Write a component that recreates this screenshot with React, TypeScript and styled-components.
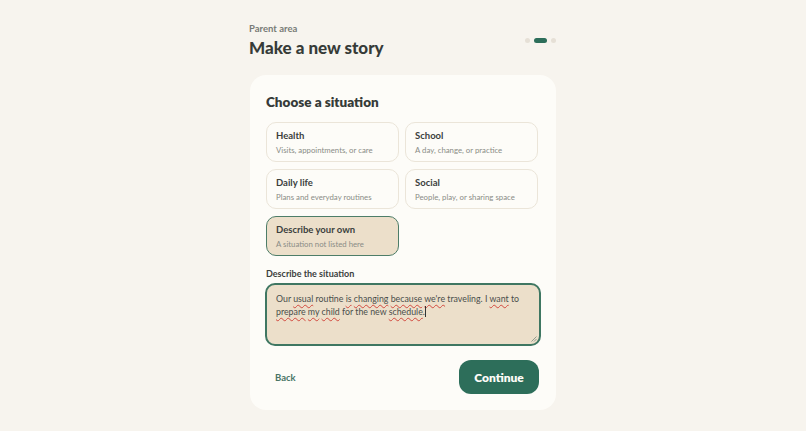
import React, { useState } from "react";
import styled, { createGlobalStyle } from "styled-components";

const Global = createGlobalStyle`
  html, body { margin: 0; padding: 0; background: #f7f4ee; }
  body { font-family: Lato, "Noto Sans", "Liberation Sans", sans-serif; color: #363b38; }
  * { box-sizing: border-box; }
`;

const Page = styled.div`
  width: 806px;
  height: 431px;
  display: flex;
  justify-content: center;
  padding-top: 23px;
`;

const Column = styled.div`
  width: 306px;
  display: flex;
  flex-direction: column;
`;

const Header = styled.div`
  display: flex;
  justify-content: space-between;
  align-items: flex-start;
  margin-left: -1px;
`;

const Titles = styled.div`
  display: flex;
  flex-direction: column;
`;

const Eyebrow = styled.div`
  font-size: 9.5px;
  font-weight: 700;
  color: #777b76;
  line-height: 12px;
`;

const Title = styled.h1`
  margin: 2px 0 0;
  font-size: 17px;
  font-weight: 900;
  color: #363b38;
  line-height: 22px;
`;

const Dots = styled.div`
  display: flex;
  gap: 4px;
  align-items: center;
  margin-top: 15px;
`;

const Dot = styled.span<{ $active?: boolean }>`
  display: block;
  width: ${(p) => (p.$active ? "13px" : "5px")};
  height: 5px;
  border-radius: 3px;
  background: ${(p) => (p.$active ? "#2d6e5a" : "#e6e0d6")};
`;

const Card = styled.div`
  margin-top: 16px;
  background: #fdfcf8;
  border-radius: 16px;
  padding: 19px 17px 16px 16px;
  height: 335px;
  display: flex;
  flex-direction: column;
`;

const CardTitle = styled.h2`
  margin: 0;
  font-size: 13.5px;
  font-weight: 800;
  line-height: 16px;
  color: #363b38;
`;

const Grid = styled.div`
  margin-top: 12px;
  display: grid;
  grid-template-columns: 133px 133px;
  column-gap: 6px;
  row-gap: 7px;
`;

const Option = styled.button<{ $selected?: boolean }>`
  height: 40px;
  text-align: left;
  font-family: inherit;
  border-radius: 10px;
  padding: 6px 9px;
  background: ${(p) => (p.$selected ? "#ecdfca" : "#fdfcf8")};
  border: ${(p) => (p.$selected ? "1.5px solid #4d7d68" : "1.5px solid #ebe5d9")};
  display: flex;
  flex-direction: column;
  justify-content: center;
  gap: 4px;
  cursor: pointer;
`;

const OptTitle = styled.span`
  font-size: 9.5px;
  font-weight: 700;
  color: #3b403d;
  line-height: 11px;
`;

const OptSub = styled.span`
  font-size: 7.8px;
  color: #8a8c86;
  line-height: 10px;
`;

const FieldLabel = styled.div`
  margin-top: 12px;
  font-size: 9px;
  font-weight: 700;
  color: #3b403d;
  line-height: 12px;
`;

const Area = styled.div`
  margin-top: 3px;
  margin-left: -1px;
  width: 276px;
  height: 63px;
  background: #ecdfca;
  border: 2px solid #3f7762;
  border-radius: 10px;
  padding: 7px 14px 6px 9px;
  font-size: 8.8px;
  line-height: 13px;
  color: #4a4e4a;
  position: relative;
`;

const Err = styled.span`
  text-decoration: underline wavy #d24a3f;
  text-decoration-thickness: 1px;
  text-underline-offset: 2px;
`;

const Caret = styled.span`
  display: inline-block;
  width: 1px;
  height: 11px;
  background: #333;
  vertical-align: -2px;
`;

const Grip = styled.svg`
  position: absolute;
  right: 2px;
  bottom: 2px;
`;

const Footer = styled.div`
  margin-top: auto;
  display: flex;
  justify-content: space-between;
  align-items: center;
`;

const BackBtn = styled.button`
  background: none;
  border: none;
  font-family: inherit;
  font-size: 9.5px;
  font-weight: 700;
  color: #4a7566;
  padding: 0 9px;
  cursor: pointer;
`;

const ContinueBtn = styled.button`
  width: 80px;
  height: 34px;
  border: none;
  border-radius: 12px;
  background: #2d6e5a;
  color: #fdfcf8;
  font-family: inherit;
  font-size: 12px;
  font-weight: 800;
  cursor: pointer;
`;

const options = [
  { t: "Health", s: "Visits, appointments, or care" },
  { t: "School", s: "A day, change, or practice" },
  { t: "Daily life", s: "Plans and everyday routines" },
  { t: "Social", s: "People, play, or sharing space" },
  { t: "Describe your own", s: "A situation not listed here" },
];

export default function App() {
  const [sel, setSel] = useState(4);
  return (
    <>
      <Global />
      <Page>
        <Column>
          <Header>
            <Titles>
              <Eyebrow>Parent area</Eyebrow>
              <Title>Make a new story</Title>
            </Titles>
            <Dots>
              <Dot />
              <Dot $active />
              <Dot />
            </Dots>
          </Header>
          <Card>
            <CardTitle>Choose a situation</CardTitle>
            <Grid>
              {options.map((o, i) => (
                <Option key={o.t} $selected={i === sel} onClick={() => setSel(i)}>
                  <OptTitle>{o.t}</OptTitle>
                  <OptSub>{o.s}</OptSub>
                </Option>
              ))}
            </Grid>
            <FieldLabel>Describe the situation</FieldLabel>
            <Area>
              Our <Err>usual</Err> routine <Err>is</Err> <Err>changing</Err> <Err>because</Err>{" "}
              <Err>we're</Err> traveling. I <Err>want</Err> to <Err>prepare</Err> <Err>my</Err>{" "}
              <Err>child</Err> for the new <Err>schedule</Err>.<Caret />
              <Grip width="6" height="6" viewBox="0 0 6 6">
                <path d="M5.5 0.5 L0.5 5.5 M5.5 3 L3 5.5" stroke="#7a8a80" strokeWidth="0.8" />
              </Grip>
            </Area>
            <Footer>
              <BackBtn>Back</BackBtn>
              <ContinueBtn>Continue</ContinueBtn>
            </Footer>
          </Card>
        </Column>
      </Page>
    </>
  );
}
